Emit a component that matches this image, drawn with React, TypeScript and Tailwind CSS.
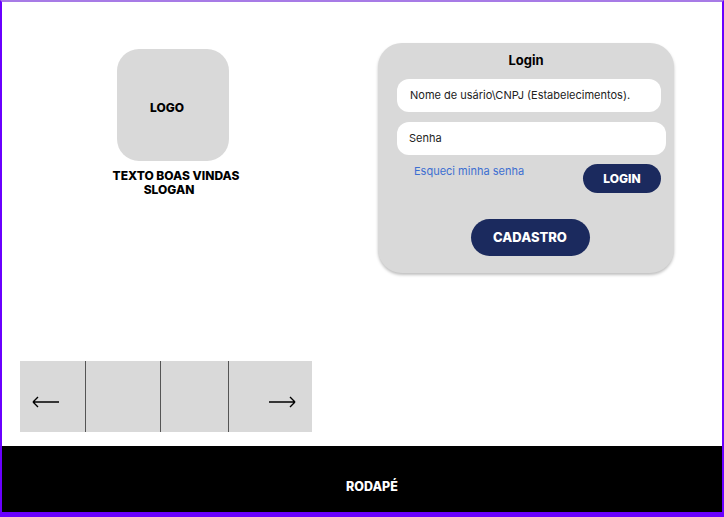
export default function App() {
  return (
    <div
      className="w-[724px] h-[517px] bg-white border-l-2 border-r-2 border-t-2 border-b-[5px] border-[#6a00ff] border-t-[#a77be6] flex flex-col overflow-hidden"
      style={{ fontFamily: 'Inter, "Noto Sans", sans-serif' }}
    >
      <div className="flex-1 relative">
        <div className="flex">
          <div className="w-[358px] flex flex-col items-center pt-[47px]">
            <div className="w-[112px] h-[112px] rounded-[22px] bg-[#d9d9d9] flex items-center justify-center ml-[-16px]">
              <span className="text-[12px] font-extrabold text-black mt-[6px] mr-[12px]">LOGO</span>
            </div>
            <div className="mt-[8px] ml-[-10px] text-center text-[12px] font-extrabold text-black leading-[14px]">
              <div>TEXTO BOAS VINDAS</div>
              <div className="pr-[14px]">SLOGAN</div>
            </div>
          </div>
          <div className="mt-[41px] ml-[18px] w-[296px] h-[230px] rounded-[24px] bg-[#d9d9d9] shadow-[0_2px_3px_rgba(0,0,0,0.25)] flex flex-col pt-[9px] px-[19px]">
            <div className="text-center text-[13px] font-bold text-black leading-[16px]">Login</div>
            <div className="mt-[11px] w-[264px] h-[33px] rounded-[12px] bg-white flex items-center px-[13px] text-[11px] text-[#222]">
              Nome de usário\CNPJ (Estabelecimentos).
            </div>
            <div className="mt-[10px] w-[269px] h-[33px] rounded-[12px] bg-white flex items-center px-[12px] text-[11px] text-[#222]">
              Senha
            </div>
            <div className="flex justify-between mt-[9px]">
              <span className="ml-[17px] mt-[-1px] text-[11px] text-[#3d6fd1]">Esqueci minha senha</span>
              <button className="mr-[-6px] w-[78px] h-[29px] rounded-full bg-[#1b2a5e] text-white text-[12px] font-extrabold">
                LOGIN
              </button>
            </div>
            <div className="flex justify-center mt-[26px]">
              <button className="w-[119px] h-[37px] rounded-full bg-[#1b2a5e] text-white text-[13px] font-extrabold ml-[8px]">
                CADASTRO
              </button>
            </div>
          </div>
        </div>
        <div className="absolute left-[18px] top-[359px] w-[292px] h-[71px] bg-[#d9d9d9] flex">
          <div className="w-[66px] border-r border-[#555] flex items-center pl-[12px] pt-[10px]">
            <svg width="28" height="12" viewBox="0 0 28 12" fill="none" stroke="#000" strokeWidth="1.4">
              <path d="M1 6H27M1 6L6 1M1 6L6 11" />
            </svg>
          </div>
          <div className="w-[75px] border-r border-[#555]" />
          <div className="w-[68px] border-r border-[#555]" />
          <div className="flex-1 flex items-center justify-end pr-[16px] pt-[10px]">
            <svg width="28" height="12" viewBox="0 0 28 12" fill="none" stroke="#000" strokeWidth="1.4">
              <path d="M1 6H27M27 6L22 1M27 6L22 11" />
            </svg>
          </div>
        </div>
      </div>
      <div className="h-[66px] bg-black flex items-center justify-center pt-[16px] pl-[20px]">
        <span className="text-white text-[12.5px] font-extrabold">RODAPÉ</span>
      </div>
    </div>
  );
}
